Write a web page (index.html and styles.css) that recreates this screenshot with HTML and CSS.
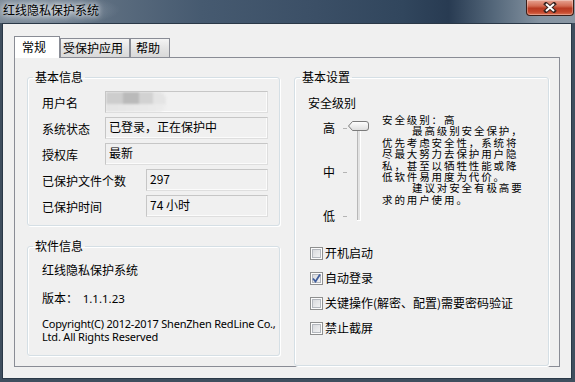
FILE: index.html
```html
<!DOCTYPE html>
<html>
<head>
    <meta charset="utf-8">
    <title>红线隐私保护系统</title>
    <link rel="stylesheet" href="styles.css">
</head>
<body>
    <div class="window">
        <div class="titlebar">
            <span class="title">红线隐私保护系统</span>
            <button class="close">
                <svg width="14" height="11" viewBox="0 0 14 11">
                    <path d="M3 2 L11 9 M11 2 L3 9" stroke="#3a2420" stroke-width="4" stroke-linecap="square"/>
                    <path d="M3 2 L11 9 M11 2 L3 9" stroke="#fff" stroke-width="2"/>
                </svg>
            </button>
        </div>
        <div class="client">
            <div class="tabs">
                <div class="tab tab-general active">常规</div>
                <div class="tab tab-apps">受保护应用</div>
                <div class="tab tab-help">帮助</div>
            </div>
            <div class="panel">
                <div class="col">
                    <fieldset class="group info">
                        <legend>基本信息</legend>
                        <div class="row">
                            <span class="label">用户名</span>
                            <span class="field"><span class="blur"></span></span>
                        </div>
                        <div class="row">
                            <span class="label">系统状态</span>
                            <span class="field">已登录，正在保护中</span>
                        </div>
                        <div class="row">
                            <span class="label">授权库</span>
                            <span class="field">最新</span>
                        </div>
                        <div class="row">
                            <span class="label wide">已保护文件个数</span>
                            <span class="field">297</span>
                        </div>
                        <div class="row">
                            <span class="label wide">已保护时间</span>
                            <span class="field">74 小时</span>
                        </div>
                    </fieldset>
                    <fieldset class="group about">
                        <legend>软件信息</legend>
                        <p class="product">红线隐私保护系统</p>
                        <p class="version">版本： <span class="num">1.1.1.23</span></p>
                        <p class="copyright">Copyright(C) 2012-2017 ShenZhen RedLine Co.,<br>Ltd. All Rights Reserved</p>
                    </fieldset>
                </div>
                <fieldset class="group settings">
                    <legend>基本设置</legend>
                    <div class="level-title">安全级别</div>
                    <div class="level-row">
                        <div class="slider">
                            <div class="levels">
                                <div class="level"><span>高</span><i class="tick"></i></div>
                                <div class="level"><span>中</span><i class="tick"></i></div>
                                <div class="level"><span>低</span><i class="tick"></i></div>
                            </div>
                            <div class="track">
                                <svg class="thumb" width="21" height="10" viewBox="0 0 21 10">
                                    <defs>
                                        <linearGradient id="tg" x1="0" y1="0" x2="0" y2="1">
                                            <stop offset="0" stop-color="#ffffff"/>
                                            <stop offset="1" stop-color="#dcdcdc"/>
                                        </linearGradient>
                                    </defs>
                                    <path d="M0.5 5 L4.5 0.5 H18 Q20.5 0.5 20.5 3 V7 Q20.5 9.5 18 9.5 H4.5 Z" fill="url(#tg)" stroke="#7b7b7b"/>
                                </svg>
                            </div>
                        </div>
                        <div class="desc">
                            <div>安全级别：高</div>
                            <div class="indent">最高级别安全保护，</div>
                            <div>优先考虑安全性，系统将</div>
                            <div>尽最大努力去保护用户隐</div>
                            <div>私，甚至以牺牲性能或降</div>
                            <div>低软件易用度为代价。</div>
                            <div class="indent">建议对安全有极高要</div>
                            <div>求的用户使用。</div>
                        </div>
                    </div>
                    <div class="checks">
                        <div class="check"><span class="box"></span>开机启动</div>
                        <div class="check"><span class="box checked">
                            <svg width="11" height="11" viewBox="0 0 11 11"><path d="M2 5.5 L4.5 8.5 L9 1.5" fill="none" stroke="#3f5d9c" stroke-width="1.8"/></svg>
                        </span>自动登录</div>
                        <div class="check"><span class="box"></span>关键操作(解密、配置)需要密码验证</div>
                        <div class="check"><span class="box"></span>禁止截屏</div>
                    </div>
                </fieldset>
            </div>
        </div>
    </div>
</body>
</html>
```

FILE: styles.css
```css
body {
    margin: 0;
    font-family: "Noto Sans CJK SC", "Noto Sans", sans-serif;
    font-size: 12px;
    color: #000;
}
.window {
    width: 575px;
    height: 382px;
    display: flex;
    flex-direction: column;
    background: #3f4e5e;
}
.titlebar {
    height: 23px;
    display: flex;
    justify-content: space-between;
    align-items: flex-start;
    background:
        radial-gradient(ellipse 70px 16px at 50px 10px, rgba(190, 200, 210, 0.55), rgba(190, 200, 210, 0)),
        linear-gradient(90deg, #7d8b99 0%, #5d6e80 18%, #465a70 35%, #3b4f66 55%, #31465d 70%, #283b52 78%, #55687b 86%, #8593a1 94%, #8a97a4 100%);
}
.title {
    padding: 2px 0 0 3px;
    line-height: 16px;
    text-shadow: 0 0 5px #fff, 0 0 9px rgba(255, 255, 255, 0.8);
}
.close {
    width: 48px;
    height: 16px;
    margin-right: 1px;
    padding: 0;
    border: 1px solid #3b1e18;
    border-top: none;
    border-radius: 0 0 4px 4px;
    background: linear-gradient(#e7a493, #d26a52 40%, #b83a22 55%, #c4472c 80%, #dc7456);
    box-shadow: inset 0 0 0 1px rgba(255, 255, 255, 0.3);
    display: flex;
    align-items: center;
    justify-content: center;
}
.client {
    flex: 1;
    margin: 0 3px 3px 2px;
    border: 1px solid #2a3847;
    background: #f0f0f0;
    padding: 12px 0 0 11px;
}
.tabs {
    display: flex;
    align-items: flex-end;
    height: 22px;
    margin-bottom: -1px;
    position: relative;
    z-index: 1;
}
.tab {
    box-sizing: border-box;
    height: 19px;
    line-height: 18px;
    border: 1px solid #898c95;
    border-bottom: none;
    margin-bottom: 1px;
    background: linear-gradient(#f4f4f4, #e4e4e4 50%, #d9d9d9);
}
.tab.active {
    height: 22px;
    line-height: 19px;
    margin-bottom: 0;
    background: #fff;
}
.tab-general {
    width: 46px;
    padding-left: 7px;
}
.tab-apps {
    width: 70px;
    padding-left: 2px;
}
.tab-help {
    width: 40px;
    padding-left: 5px;
}
.panel {
    box-sizing: border-box;
    width: 546px;
    height: 310px;
    border: 1px solid #898c95;
    padding: 11px 10px 0 12px;
    display: grid;
    grid-template-columns: 253px 255px;
    column-gap: 14px;
    align-items: start;
}
.col {
    display: flex;
    flex-direction: column;
    gap: 12px;
}
.group {
    box-sizing: border-box;
    margin: 0;
    min-width: 0;
    border: 1px solid #d5dfe5;
    border-radius: 3px;
    box-shadow: inset 1px 1px 0 #fff, 1px 1px 0 #fff;
}
.group legend {
    margin-left: -9px;
    padding: 0 2px;
    line-height: 16px;
}
.settings legend {
    margin-left: -8px;
}
.info {
    height: 157px;
    padding: 6px 11px 0 14px;
}
.row {
    display: flex;
    align-items: center;
    height: 22px;
    margin-bottom: 4px;
}
.label {
    width: 63px;
    flex: none;
}
.label.wide {
    width: 104px;
}
.field {
    flex: 1;
    box-sizing: border-box;
    height: 22px;
    line-height: 18px;
    padding-left: 3px;
    border: 1px solid;
    border-color: #c6c6c6 #dedede #dedede #c6c6c6;
    box-shadow: inset -1px -1px 0 #fbfbfb;
    overflow: hidden;
}
.blur {
    display: block;
    width: 60px;
    height: 20px;
    margin-left: -3px;
    background:
        linear-gradient(90deg, #cdcdcd 0 28%, #bababa 28% 55%, #d2d2d2 55% 78%, #e4e4e4 78%) top / 100% 12px no-repeat,
        linear-gradient(90deg, #e4e4e4, #ececec);
    filter: blur(1.2px);
    border-radius: 0 8px 8px 0;
}
.about {
    height: 118px;
    padding: 8px 0 0 14px;
}
.about p {
    margin: 0;
    line-height: 16px;
}
.version {
    margin-top: 12px !important;
}
.num {
    margin-left: 2px;
    font-family: "Noto Sans", sans-serif;
    font-size: 11.5px;
}
.copyright {
    margin-top: 10px !important;
    line-height: 13px !important;
    font-family: "Noto Sans", sans-serif;
    font-size: 11px;
    letter-spacing: -0.2px;
}
.settings {
    align-self: stretch;
    padding: 0 0 0 13px;
}
.level-title {
    margin-top: 10px;
    line-height: 16px;
}
.level-row {
    display: flex;
    align-items: flex-start;
    margin-top: 2px;
}
.slider {
    width: 74px;
    flex: none;
    display: flex;
    margin-top: 7px;
}
.levels {
    padding-left: 15px;
    display: flex;
    flex-direction: column;
    gap: 28px;
}
.level {
    display: flex;
    align-items: center;
    height: 16px;
    line-height: 16px;
}
.tick {
    width: 4px;
    height: 1px;
    margin-left: 8px;
    background: #b4b4b4;
}
.track {
    position: relative;
    box-sizing: border-box;
    width: 4px;
    height: 90px;
    margin: 10px 0 0 10px;
    border-left: 1px solid #b8b8b8;
    border-right: 1px solid #fff;
    background: #e3e3e3;
    box-shadow: inset 0 1px 0 #b8b8b8, 0 1px 0 #fff;
}
.thumb {
    position: absolute;
    left: -10px;
    top: -9px;
}
.desc {
    font-size: 10.5px;
    letter-spacing: 1.9px;
    line-height: 11.4px;
    white-space: nowrap;
    padding-top: 1px;
}
.desc div {
    height: 11.4px;
}
.indent {
    padding-left: 30px;
}
.checks {
    margin-top: 21px;
    padding-left: 2px;
    display: flex;
    flex-direction: column;
    gap: 9px;
}
.check {
    display: flex;
    align-items: center;
    gap: 2px;
    height: 16px;
    line-height: 16px;
}
.box {
    box-sizing: border-box;
    width: 13px;
    height: 13px;
    border: 1px solid #8e8f8f;
    background: linear-gradient(135deg, #d2d4d8, #f8f8f8);
    box-shadow: inset 0 0 0 1px #fcfcfc, inset 0 0 0 2px #b3b7bd;
    display: flex;
    align-items: center;
    justify-content: center;
}
.box svg {
    display: block;
}
```
